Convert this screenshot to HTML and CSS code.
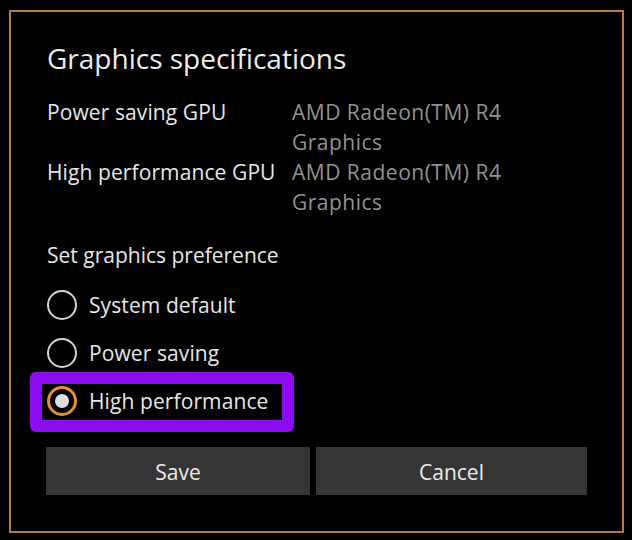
FILE: index.html
```html
<!DOCTYPE html>
<html lang="en">
<head>
<meta charset="utf-8">
<title>Graphics specifications</title>
<link rel="stylesheet" href="styles.css">
</head>
<body>
<div class="dialog">
  <h1 class="title">Graphics specifications</h1>
  <div class="specs">
    <div class="label">Power saving GPU</div>
    <div class="value">AMD Radeon(TM) R4 Graphics</div>
    <div class="label">High performance GPU</div>
    <div class="value">AMD Radeon(TM) R4 Graphics</div>
  </div>
  <div class="pref-title">Set graphics preference</div>
  <div class="options">
    <div class="option"><span class="radio"></span><span class="opt-text">System default</span></div>
    <div class="option"><span class="radio"></span><span class="opt-text">Power saving</span></div>
    <div class="option selected"><span class="highlight"></span><span class="radio"><span class="dot"></span></span><span class="opt-text">High performance</span></div>
  </div>
  <div class="buttons">
    <button class="btn">Save</button>
    <button class="btn">Cancel</button>
  </div>
</div>
</body>
</html>
```
FILE: styles.css
```css
html, body {
  margin: 0;
  padding: 0;
  background: #000;
}
body {
  font-family: "Open Sans", "Noto Sans", sans-serif;
  color: #e6e6e6;
}
.dialog {
  margin: 10px 8px 0 9px;
  border: 2px solid #b97a3e;
  padding: 27px 35px 36px 35px;
  height: 456px;
  box-sizing: content-box;
}
.title {
  margin: 0 0 20px 1px;
  font-size: 28px;
  line-height: 38px;
  font-weight: 400;
  color: #ececec;
}
.specs {
  display: grid;
  grid-template-columns: 246px 1fr;
  font-size: 21px;
  line-height: 30px;
}
.label {
  color: #e6e6e6;
  padding-left: 1px;
  letter-spacing: 0.1px;
}
.value {
  color: #929292;
  max-width: 250px;
  letter-spacing: 0.5px;
}
.pref-title {
  margin-top: 23px;
  font-size: 21px;
  line-height: 30px;
  padding-left: 1px;
}
.options {
  margin-top: 11px;
  display: flex;
  flex-direction: column;
}
.option {
  position: relative;
  display: flex;
  align-items: center;
  height: 48px;
  font-size: 21px;
}
.radio {
  position: relative;
  width: 30px;
  height: 30px;
  box-sizing: border-box;
  border: 2.5px solid #d4d4d4;
  border-radius: 50%;
  display: flex;
  align-items: center;
  justify-content: center;
  margin-left: 1px;
}
.opt-text {
  margin-left: 12px;
  position: relative;
  letter-spacing: 0.1px;
}
.selected .radio {
  border: 3px solid #e0902c;
}
.dot {
  width: 14px;
  height: 14px;
  border-radius: 50%;
  background: #dedede;
}
.highlight {
  position: absolute;
  left: -16px;
  top: -5px;
  width: 264px;
  height: 60px;
  box-sizing: border-box;
  border: 12px solid #8e0cf2;
  border-radius: 6px;
}
.buttons {
  margin-top: 22px;
  display: grid;
  grid-template-columns: 264px 271px;
  column-gap: 6px;
}
.btn {
  height: 48px;
  border: none;
  background: #353535;
  color: #ececec;
  font-family: "Open Sans", "Noto Sans", sans-serif;
  font-size: 21px;
  line-height: 50px;
  padding: 0;
}
```
